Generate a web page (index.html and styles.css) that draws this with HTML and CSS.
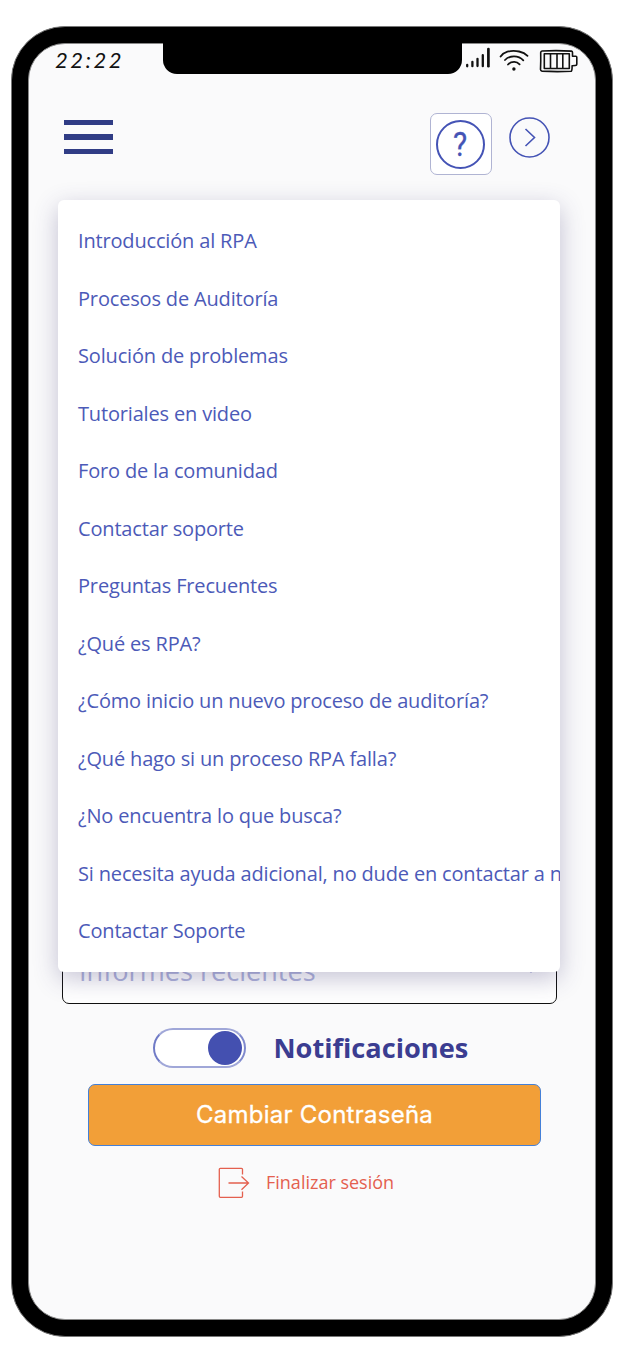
FILE: index.html
```html
<!DOCTYPE html>
<html lang="es">
<head>
<meta charset="utf-8">
<title>Ayuda</title>
<link rel="stylesheet" href="styles.css">
</head>
<body>
<div class="phone">
  <div class="screen">
    <div class="status">
      <span class="time">22:22</span>
      <div class="notch"></div>
      <svg class="signals" width="116" height="30" viewBox="462 44 116 30" fill="none" stroke="#111" stroke-linecap="round" stroke-linejoin="round">
        <g stroke-width="2.3"><path d="M467.2 65v1.300M472.4 61.8v4.400M477.5 58.800v7.300M482.800 55.200v11"/><path d="M488.400 49v17.200" stroke-width="2.700"/></g>
        <g stroke-width="1.800"><path d="M500.600 56.600q2.300-3.500 6.800-4.900 5.500-1.400 11.700-.2 5.400 1.200 8.400 4.300M505 60q3.500-3.700 9-3.700 5.700 0 9.300 4M508 64.500q2.500-2.800 6.300-2.700 3 .1 5.300 2.500"/></g>
        <circle cx="513.900" cy="69" r="1.700" fill="#111" stroke="none"/>
        <g stroke-width="1.600"><path d="M542 51q15-.8 29.500.1 1 .1 1 1.500v3.700h3.300q1.100 0 1 1.400v6.500q0 1.200-1.500 1.300l-3.200.2q.1 4.600-.8 5.500-15 .8-29.300-.1-1.500-.2-1.500-1.500.4-8 .2-17 .1-1.500 1.300-1.600zM544.300 53.700h25V68.500h-25zM550.500 53.700v14.800M557 53.700v14.800M562.800 53.700v14.800"/></g>
      </svg>
    </div>
    <header class="topbar">
      <button class="burger" aria-label="Menú"><span></span><span></span><span></span></button>
      <div class="actions">
        <button class="help" aria-label="Ayuda"><span class="help-ring"><span class="mark">?</span></span></button>
        <button class="next" aria-label="Siguiente">
          <svg width="41" height="41" viewBox="0 0 41 41" fill="none" stroke="#4453b5" stroke-width="1.600"><circle cx="20.500" cy="20.500" r="19.500"/><path d="M16.500 12l9 8.500-9 8.500"/></svg>
        </button>
      </div>
    </header>
    <main class="content">
      <div class="select"><span>Informes recientes</span>
        <svg width="14" height="8" viewBox="0 0 14 8"><path d="M1 0l6 5 6-5" fill="none" stroke="#b3b6dd" stroke-width="1.500"/></svg>
      </div>
      <div class="notify"><span class="toggle"><span class="knob"></span></span><span class="notify-label">Notificaciones</span></div>
      <button class="primary"><span>Cambiar Contraseña</span></button>
      <a class="logout">
        <svg width="32" height="32" viewBox="0 0 32 32" fill="none" stroke="#e4604f" stroke-width="1.300"><path d="M24.500 7.500V2.300q0-1-1-1H2.300q-1 0-1 1v27q0 1 1 1h21.200q1 0 1-1V24.500M10.500 16h20M23.500 9.500l7 6.500-7 6.700"/></svg>
        <span>Finalizar sesión</span>
      </a>
    </main>
    <ul class="menu">
      <li>Introducción al RPA</li>
      <li>Procesos de Auditoría</li>
      <li>Solución de problemas</li>
      <li>Tutoriales en video</li>
      <li>Foro de la comunidad</li>
      <li>Contactar soporte</li>
      <li>Preguntas Frecuentes</li>
      <li>¿Qué es RPA?</li>
      <li>¿Cómo inicio un nuevo proceso de auditoría?</li>
      <li>¿Qué hago si un proceso RPA falla?</li>
      <li>¿No encuentra lo que busca?</li>
      <li>Si necesita ayuda adicional, no dude en contactar a n</li>
      <li>Contactar Soporte</li>
    </ul>
  </div>
</div>
</body>
</html>
```
FILE: styles.css
```css
* { box-sizing: border-box; }
body { margin: 0; background: #fff; font-family: "Open Sans", sans-serif; }
button { padding: 0; border: 0; background: none; font: inherit; }
.phone {
  width: 602px; height: 1311px; margin: 26px 0 0 11px; padding: 16px;
  border-radius: 54px; background: #000; border: 1px solid #777;
  display: flow-root;
}
.screen {
  position: relative; height: 100%; border-radius: 37px;
  background: #fafafb; border: 1px solid #888;
}
.status { display: flex; height: 31px; }
.time {
  width: 134px; padding-left: 26px; font: italic 400 22px/31px Lato, sans-serif;
  letter-spacing: 2.500px; color: #111;
}
.notch { width: 299px; height: 31px; margin-top: -1px; background: #000; border-radius: 0 0 14px 14px; }
.signals { display: block; }
.topbar { display: flex; justify-content: space-between; align-items: flex-start; padding: 38px 46px 0 35px; height: 126px; }
.burger { display: flex; flex-direction: column; gap: 9.200px; width: 49px; margin-top: 7px; }
.burger span { height: 5.300px; background: #303c85; }
.actions { display: flex; gap: 17px; margin-right: -.5px; }
.help {
  width: 62px; height: 62px; border: 1.500px solid #b0b4d3; border-radius: 7px;
  background: #fff; display: grid; place-items: center;
}
.help-ring {
  width: 49px; height: 49px; border: 2px solid #4453b5; border-radius: 50%;
  display: grid; place-items: center; color: #4453b5; font: 400 34px/45px Roboto, sans-serif;
  -webkit-text-stroke: .3px #4453b5;
}
.mark { transform: scaleX(.88); }
.next { height: 41px; margin-top: 4px; }
.next svg, .logout svg { display: block; }
.content { padding: 741px 0 0; display: flex; flex-direction: column; }
.select {
  width: 495px; height: 62px; margin-left: 33px; padding: 0 18px 5px 16px;
  display: flex; align-items: center; justify-content: space-between;
  border: 1.500px solid #111; border-radius: 7px; background: #fff;
  color: #b0b4dc; font-size: 27.100px; line-height: 54px;
}
.notify { display: flex; align-items: center; margin: 23px 0 0 124px; height: 42px; }
.toggle {
  width: 93px; height: 40px; border: 2.500px solid #a0a7d8; border-radius: 20px;
  border-left-color: #6f7ac6; border-right-color: #7f89cd; background: #fff;
  display: flex; justify-content: flex-end; align-items: center; padding-right: 2.500px;
}
.knob { width: 34px; height: 34px; border-radius: 50%; background: #4450b0; }
.notify-label { margin-left: 27.500px; font-size: 27.200px; font-weight: 700; color: #3b3d91; line-height: 42px; }
.primary {
  width: 453px; height: 62px; margin: 15px 0 0 59px; background: #f29f38;
  border: 1.500px solid #4480d8; border-radius: 7px;
  color: #fff; font: 400 24px/58px Inter, sans-serif; letter-spacing: .25px;
  -webkit-text-stroke: .3px #fff;
}
.logout { display: flex; align-items: center; gap: 16px; margin: 20px 0 0 189px; color: #e4604f; font-size: 18px; line-height: 33px; }
.menu {
  position: absolute; left: 29px; top: 156px; width: 501.500px; height: 771.500px;
  margin: 0; padding: 12px 0 12px 20px; list-style: none; overflow: hidden;
  background: #fff; border-radius: 6px; box-shadow: 0 7px 24px rgba(60, 50, 110, .29);
  color: #4c5ab8; font-size: 20px; letter-spacing: -.165px;
}
.menu li { height: 57.500px; line-height: 57.500px; white-space: nowrap; }
```
